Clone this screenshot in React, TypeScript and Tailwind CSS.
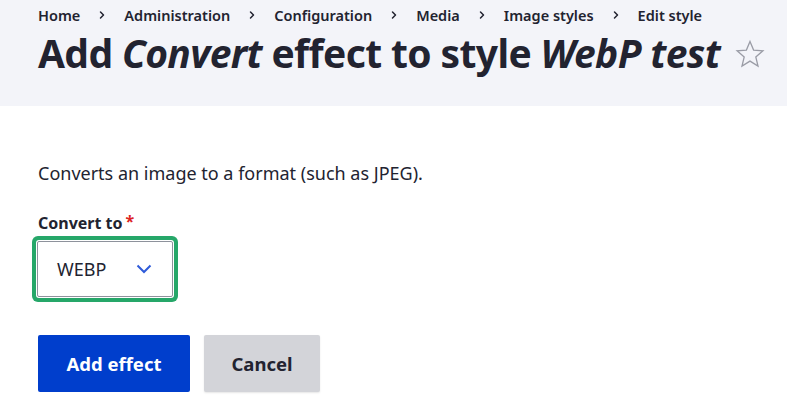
import { ChevronRight } from "lucide-react";

const crumbs = ["Home", "Administration", "Configuration", "Media", "Image styles", "Edit style"];

export default function App() {
  return (
    <div className="min-h-[415px] overflow-hidden bg-white text-[#222330] font-['Noto_Sans',sans-serif]">
      <header className="bg-[#f3f4f9] px-[38px] pt-[4px] h-[106px]">
        <nav className="flex items-center whitespace-nowrap text-[14.5px] font-semibold leading-[22px]">
          {crumbs.map((c, i) => (
            <span key={c} className="flex items-center">
              {i > 0 && <ChevronRight className="mx-[16px] h-[12px] w-[12px]" strokeWidth={3} />}
              {c}
            </span>
          ))}
        </nav>
        <h1 className="mt-[5px] flex items-center whitespace-nowrap text-[39px] font-bold leading-[44px] tracking-[-0.63px]">
          <span>
            Add <em>Convert</em> effect to style <em>WebP test</em>
          </span>
          <svg className="ml-[15px] mt-[2px] shrink-0" width="30" height="30" viewBox="0 0 30 30" fill="none">
            <path
              d="M15 2.5l3.6 8.6 9.3.7-7.1 6.1 2.2 9.1L15 22.1 7 27l2.2-9.1-7.1-6.1 9.3-.7z"
              stroke="#9a9ca6"
              strokeWidth="1.3"
              strokeLinejoin="miter"
            />
          </svg>
        </h1>
      </header>

      <main className="px-[38px] pt-[54px]">
        <p className="text-[18px] leading-[27px]">Converts an image to a format (such as JPEG).</p>

        <label className="mt-[25px] flex items-start text-[16px] font-bold leading-[22px]">
          Convert to<span className="ml-[3px] text-[16px] leading-[18px] text-[#dc2323]">*</span>
        </label>
        <div className="ml-[-1px] mt-[7px] flex h-[56px] w-[136px] items-center justify-between rounded-[2px] border border-[#8e929c] bg-white pl-[19px] pr-[20px] text-[18px] ring-[4px] ring-[#26a769] ring-offset-1">
          <span>WEBP</span>
          <svg width="16" height="10" viewBox="0 0 16 10" fill="none">
            <path d="M1.5 1.5L8 8l6.5-6.5" stroke="#2f5bd9" strokeWidth="2" />
          </svg>
        </div>

        <div className="mt-[38px] flex gap-[14px]">
          <button className="h-[57px] w-[152px] rounded-[2px] bg-[#003ecc] text-[18.5px] font-bold text-white">
            Add effect
          </button>
          <button className="h-[57px] w-[116px] rounded-[2px] bg-[#d3d4d9] text-[18.5px] font-bold text-[#222330] shadow-[0_1px_2px_rgba(0,0,0,0.1)]">
            Cancel
          </button>
        </div>
      </main>
    </div>
  );
}
